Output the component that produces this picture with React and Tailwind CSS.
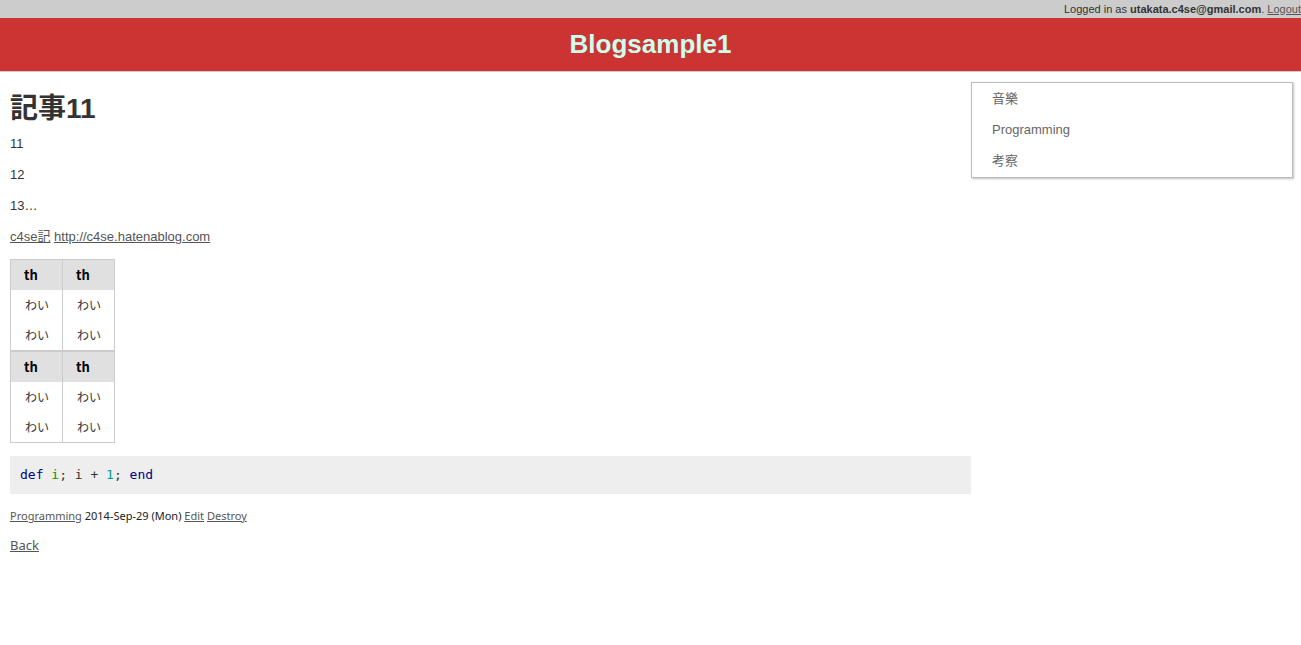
import React from 'react';

const sans = { fontFamily: '"Liberation Sans", Arial, "Noto Sans CJK JP", sans-serif' };

function Section() {
  return (
    <>
      <tr className="bg-[#e0e0e0]">
        <th className="h-[30.5px] w-[52px] border-x border-[#ccc] pl-[13px] text-left text-[13px] font-bold text-black">th</th>
        <th className="h-[30.5px] w-[52px] border-x border-[#ccc] pl-[13px] text-left text-[13px] font-bold text-black">th</th>
      </tr>
      {[0, 1].map((i) => (
        <tr key={i}>
          <td className="h-[30.5px] border-x border-[#ccc] pl-[14px] text-[12px] text-[#333]">わい</td>
          <td className="h-[30.5px] border-x border-[#ccc] pl-[14px] text-[12px] text-[#333]">わい</td>
        </tr>
      ))}
    </>
  );
}

export default function App() {
  return (
    <div className="min-h-screen bg-white text-[#333]" style={sans}>
      <div className="flex h-[18px] items-center justify-end bg-[#ccc] text-[11px] text-[#333]">
        <span>
          Logged in as <b>utakata.c4se@gmail.com</b>. <a className="text-[#555] underline">Logout</a>
        </span>
      </div>
      <header className="flex h-[54px] items-center justify-center border-b border-[#ccc] bg-[#cc3333]">
        <h1 className="text-[26px] font-bold text-[#ccffee]">Blogsample1</h1>
      </header>

      <div className="flex">
        <main className="w-[971px] shrink-0 pl-[10px]">
          <h2 className="mt-[19px] text-[28px] font-bold leading-[36px] text-[#333]">記事11</h2>
          <div className="text-[13px] leading-[18px]">
            <p className="mt-[8px]">11</p>
            <p className="mt-[13px]">12</p>
            <p className="mt-[13px]">13…</p>
            <p className="mt-[13px]">
              <a className="text-[#555] underline">c4se記</a>{' '}
              <a className="text-[#555] underline">http://c4se.hatenablog.com</a>
            </p>
          </div>

          <table className="mt-[13px] border-collapse border border-[#ccc]" style={{ fontFamily: '"Noto Sans CJK JP", "Noto Sans", sans-serif' }}>
            <tbody className="border-b-2 border-[#ccc]">
              <Section />
            </tbody>
            <tbody>
              <Section />
            </tbody>
          </table>

          <pre className="mt-[13px] h-[38px] bg-[#eee] px-[10px] py-[9px] text-[13px] leading-[20px]" style={{ fontFamily: '"DejaVu Sans Mono", monospace' }}>
            <span className="text-[#000088]">def</span>{' '}
            <span className="text-[#009900]">i</span>
            <span className="text-[#333]">; i + </span>
            <span className="text-[#009999]">1</span>
            <span className="text-[#333]">; </span>
            <span className="text-[#000088]">end</span>
          </pre>

          <p className="mt-[14px] text-[11px] text-[#222]" style={{ fontFamily: '"Noto Sans", "Open Sans", sans-serif' }}>
            <a className="text-[#555] underline">Programming</a> 2014-Sep-29 (Mon){' '}
            <a className="text-[#555] underline">Edit</a>{' '}
            <a className="text-[#555] underline">Destroy</a>
          </p>
          <p className="mt-[11px] text-[13px]" style={{ fontFamily: '"Noto Sans", "Open Sans", sans-serif' }}>
            <a className="text-[#555] underline">Back</a>
          </p>
        </main>

        <aside className="mt-[10px] h-[96px] w-[322px] border border-[#bbb] py-[5px] shadow-[1px_1px_2px_rgba(0,0,0,0.25)]">
          <ul className="text-[13px] text-[#666]">
            <li className="h-[31px] pl-[20px] leading-[21px]">音樂</li>
            <li className="h-[31px] pl-[20px] leading-[21px]">Programming</li>
            <li className="h-[31px] pl-[20px] leading-[21px]">考察</li>
          </ul>
        </aside>
      </div>
    </div>
  );
}
